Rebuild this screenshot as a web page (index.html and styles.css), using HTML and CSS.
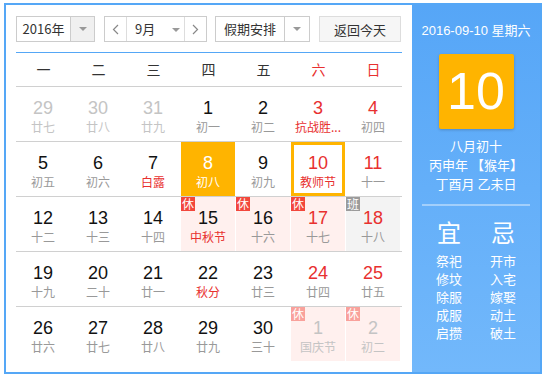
FILE: index.html
```html
<!DOCTYPE html>
<html lang="zh-CN">
<head>
    <meta charset="UTF-8">
    <title>万年历</title>
    <link rel="stylesheet" href="styles.css">
</head>
<body>
    <div class="calendar">
        <div class="main">
            <div class="toolbar">
                <div class="select year-select">
                    <span class="select-text">2016年</span>
                    <span class="select-arrow gray"><i class="caret"></i></span>
                </div>
                <div class="month-group">
                    <span class="nav">
                        <svg width="7" height="11" viewBox="0 0 7 11"><polyline points="6,1 1.5,5.5 6,10" fill="none" stroke="#888" stroke-width="1.2"/></svg>
                    </span>
                    <span class="month-text">9月 <i class="caret"></i></span>
                    <span class="nav">
                        <svg width="7" height="11" viewBox="0 0 7 11"><polyline points="1,1 5.5,5.5 1,10" fill="none" stroke="#888" stroke-width="1.2"/></svg>
                    </span>
                </div>
                <div class="select holiday-select">
                    <span class="select-text">假期安排</span>
                    <span class="select-arrow"><i class="caret"></i></span>
                </div>
                <button class="today-btn">返回今天</button>
            </div>

            <div class="week-head">
                <span>一</span><span>二</span><span>三</span><span>四</span><span>五</span>
                <span class="red">六</span><span class="red">日</span>
            </div>

            <div class="days">
                <div class="row">
                    <div class="day other"><b>29</b><em>廿七</em></div>
                    <div class="day other"><b>30</b><em>廿八</em></div>
                    <div class="day other"><b>31</b><em>廿九</em></div>
                    <div class="day"><b>1</b><em>初一</em></div>
                    <div class="day"><b>2</b><em>初二</em></div>
                    <div class="day"><b class="red">3</b><em class="red">抗战胜...</em></div>
                    <div class="day"><b class="red">4</b><em>初四</em></div>
                </div>
                <div class="row">
                    <div class="day"><b>5</b><em>初五</em></div>
                    <div class="day"><b>6</b><em>初六</em></div>
                    <div class="day"><b>7</b><em class="red">白露</em></div>
                    <div class="day selected"><b>8</b><em>初八</em></div>
                    <div class="day"><b>9</b><em>初九</em></div>
                    <div class="day today"><b class="red">10</b><em class="red">教师节</em></div>
                    <div class="day"><b class="red">11</b><em>十一</em></div>
                </div>
                <div class="row">
                    <div class="day"><b>12</b><em>十二</em></div>
                    <div class="day"><b>13</b><em>十三</em></div>
                    <div class="day"><b>14</b><em>十四</em></div>
                    <div class="day rest"><span class="badge">休</span><b>15</b><em class="red">中秋节</em></div>
                    <div class="day rest"><span class="badge">休</span><b>16</b><em>十六</em></div>
                    <div class="day rest"><span class="badge">休</span><b class="red">17</b><em>十七</em></div>
                    <div class="day work"><span class="badge">班</span><b class="red">18</b><em>十八</em></div>
                </div>
                <div class="row">
                    <div class="day"><b>19</b><em>十九</em></div>
                    <div class="day"><b>20</b><em>二十</em></div>
                    <div class="day"><b>21</b><em>廿一</em></div>
                    <div class="day"><b>22</b><em class="red">秋分</em></div>
                    <div class="day"><b>23</b><em>廿三</em></div>
                    <div class="day"><b class="red">24</b><em>廿四</em></div>
                    <div class="day"><b class="red">25</b><em>廿五</em></div>
                </div>
                <div class="row">
                    <div class="day"><b>26</b><em>廿六</em></div>
                    <div class="day"><b>27</b><em>廿七</em></div>
                    <div class="day"><b>28</b><em>廿八</em></div>
                    <div class="day"><b>29</b><em>廿九</em></div>
                    <div class="day"><b>30</b><em>三十</em></div>
                    <div class="day rest other"><span class="badge">休</span><b>1</b><em>国庆节</em></div>
                    <div class="day rest other"><span class="badge">休</span><b>2</b><em>初二</em></div>
                </div>
            </div>
        </div>

        <div class="side">
            <div class="side-date">2016-09-10 星期六</div>
            <div class="big-day">10</div>
            <div class="lunar-info">
                <p>八月初十</p>
                <p>丙申年 【猴年】</p>
                <p>丁酉月 乙未日</p>
            </div>
            <div class="almanac">
                <div class="almanac-col">
                    <h3>宜</h3>
                    <p>祭祀</p><p>修坟</p><p>除服</p><p>成服</p><p>启攒</p>
                </div>
                <div class="almanac-col">
                    <h3>忌</h3>
                    <p>开市</p><p>入宅</p><p>嫁娶</p><p>动土</p><p>破土</p>
                </div>
            </div>
        </div>
    </div>
</body>
</html>
```

FILE: styles.css
```css
body {
    margin: 0;
    padding: 3px 0 0 4px;
    font-family: "Liberation Sans", "Noto Sans CJK SC", sans-serif;
    background: #fff;
}

.calendar {
    display: flex;
    width: 538px;
    height: 371px;
    box-sizing: border-box;
    border: 2px solid #55a7f6;
}

.main {
    width: 406px;
    padding: 11px 10px 0 10px;
    box-sizing: border-box;
    background: #fff;
}

/* toolbar */
.toolbar {
    display: flex;
    height: 26px;
    font-family: "Noto Sans CJK SC", sans-serif;
    font-size: 13px;
    color: #333;
}

.select {
    display: flex;
    border: 1px solid #ccc;
    box-sizing: border-box;
    height: 26px;
}

.select-text {
    flex: 1;
    text-align: center;
    line-height: 24px;
}

.select-arrow {
    width: 23px;
    border-left: 1px solid #ccc;
    display: flex;
    align-items: center;
    justify-content: center;
}

.select-arrow.gray {
    background: #f0f0f0;
}

.caret {
    display: inline-block;
    width: 0;
    height: 0;
    border-left: 4px solid transparent;
    border-right: 4px solid transparent;
    border-top: 4px solid #999;
    vertical-align: middle;
}

.year-select {
    width: 79px;
}

.month-group {
    display: flex;
    width: 103px;
    height: 26px;
    margin-left: 9px;
    border: 1px solid #ccc;
    box-sizing: border-box;
}

.nav {
    width: 21px;
    display: flex;
    align-items: center;
    justify-content: center;
}

.month-group .nav:first-child {
    border-right: 1px solid #ddd;
}

.month-group .nav:last-child {
    border-left: 1px solid #ddd;
}

.month-text {
    flex: 1;
    line-height: 24px;
    padding-left: 8px;
}

.month-text .caret {
    margin-left: 14px;
}

.holiday-select {
    width: 95px;
    margin-left: 8px;
}

.holiday-select .select-arrow {
    width: 24px;
}

.today-btn {
    width: 82px;
    height: 26px;
    margin-left: 9px;
    border: 1px solid #ddd;
    background: #f6f6f6;
    font-family: "Noto Sans CJK SC", sans-serif;
    font-size: 13px;
    color: #333;
    padding: 0;
}

/* week header */
.week-head {
    display: flex;
    margin-top: 10px;
    border-top: 1px solid #55a7f6;
    height: 33px;
    font-family: "Noto Sans CJK SC", sans-serif;
    font-size: 14px;
    color: #333;
}

.week-head span {
    width: 55px;
    text-align: center;
    line-height: 33px;
}

.red {
    color: #e8302f;
}

/* day grid */
.row {
    display: flex;
    border-top: 1px solid #d0d0d0;
    height: 54px;
}

.day {
    position: relative;
    width: 54px;
    margin-right: 1px;
    box-sizing: border-box;
    text-align: center;
    padding-top: 11px;
}

.day b {
    display: block;
    font-weight: normal;
    font-size: 18px;
    line-height: 20px;
    color: #111;
}

.day em {
    display: block;
    font-style: normal;
    font-family: "Noto Sans CJK SC", sans-serif;
    font-size: 12px;
    line-height: 18px;
    color: #999;
    white-space: nowrap;
}

.day b.red, .day em.red {
    color: #e8302f;
}

.day.other b, .day.other em {
    color: #c4c4c4;
}

.day.selected {
    background: #ffb400;
}

.day.selected b, .day.selected em {
    color: #fff;
}

.day.today {
    border: 3px solid #ffb400;
    padding-top: 8px;
}

.day.rest {
    background: #fff0ee;
}

.day.work {
    background: #f3f3f3;
}

.badge {
    position: absolute;
    left: 0;
    top: 0;
    width: 14px;
    height: 14px;
    line-height: 14px;
    font-family: "Noto Sans CJK SC", sans-serif;
    font-size: 12px;
    color: #fff;
    background: #f2473c;
    text-align: center;
}

.day.work .badge {
    background: #9b9b9b;
}

.day.other .badge {
    background: #f9a19b;
}

/* right side */
.side {
    flex: 1;
    background: linear-gradient(#56a6f7, #72b8fb);
    color: #fff;
    text-align: center;
    font-family: "Noto Sans CJK SC", sans-serif;
    padding: 0 10px;
}

.side-date {
    margin: 16px -10px 0;
    white-space: nowrap;
    font-size: 13px;
    line-height: 20px;
    font-family: "Liberation Sans", "Noto Sans CJK SC", sans-serif;
}

.big-day {
    width: 75px;
    height: 75px;
    margin: 13px auto 0;
    background: #ffb400;
    border-radius: 2px;
    box-shadow: 0 1px 3px rgba(0, 0, 0, 0.2);
    font-family: "Liberation Sans", sans-serif;
    font-size: 52px;
    line-height: 75px;
}

.lunar-info {
    margin-top: 7px;
    font-size: 13px;
    line-height: 19px;
}

.lunar-info p {
    margin: 0;
}

.almanac {
    display: flex;
    margin-top: 11px;
    border-top: 2px solid rgba(255, 255, 255, 0.4);
    padding-top: 11px;
}

.almanac-col {
    flex: 1;
}

.almanac-col h3 {
    margin: 0 0 5px;
    font-size: 24px;
    font-weight: normal;
    line-height: 30px;
}

.almanac-col p {
    margin: 0;
    font-size: 13px;
    line-height: 18px;
}
```
